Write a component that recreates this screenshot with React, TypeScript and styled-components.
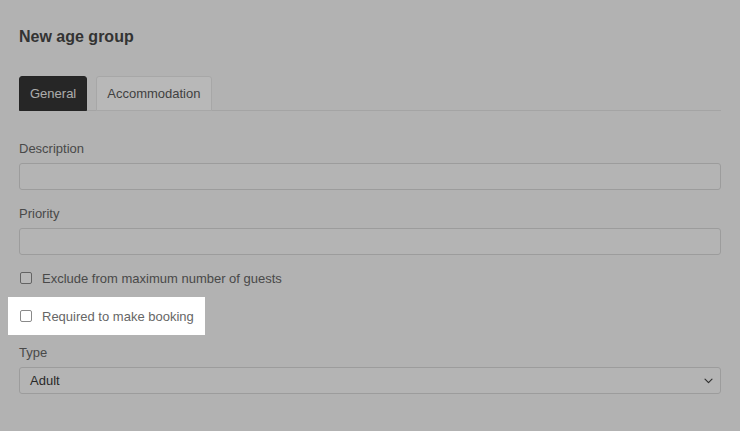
import React from "react";
import styled, { createGlobalStyle } from "styled-components";

const Global = createGlobalStyle`
  html, body { margin: 0; padding: 0; background: #f7f7f7; }
  body { font-family: "Liberation Sans", Arial, sans-serif; }
  * { box-sizing: border-box; }
`;

const Page = styled.div`
  padding: 27px 19px 30px 19px;
  min-height: 431px;
  background: #f7f7f7;
  display: flex;
  flex-direction: column;
`;

const Overlay = styled.div`
  position: fixed;
  inset: 0;
  background: rgba(0, 0, 0, 0.28);
  z-index: 1;
`;

const Title = styled.h1`
  margin: 0;
  font-size: 16px;
  line-height: 20px;
  font-weight: 700;
  color: #474747;
`;

const TabList = styled.div`
  margin-top: 29px;
  display: flex;
  gap: 9px;
  border-bottom: 1px solid #e4e4e4;
`;

const Tab = styled.button<{ $active?: boolean; $padRight?: number }>`
  font-family: inherit;
  font-size: 13px;
  height: 35px;
  padding: 0 ${(p) => p.$padRight ?? 10}px 0 10px;
  margin-bottom: -1px;
  border-radius: 3px 3px 0 0;
  border: 1px solid ${(p) => (p.$active ? "#333" : "#e8e8e8")};
  background: ${(p) => (p.$active ? "#353535" : "#ffffff")};
  color: ${(p) => (p.$active ? "#eeeeee" : "#5a5a5a")};
  cursor: pointer;
`;

const Field = styled.div<{ $top: number }>`
  margin-top: ${(p) => p.$top}px;
  display: flex;
  flex-direction: column;
`;

const Label = styled.label`
  font-size: 13px;
  line-height: 15px;
  color: #666;
  margin-bottom: 7px;
`;

const TextInput = styled.input`
  height: 27px;
  width: 100%;
  border: 1px solid #d8d8d8;
  border-radius: 3px;
  background: #fafafa;
  font-family: inherit;
  font-size: 13px;
  padding: 0 10px;
`;

const SelectBox = styled.div`
  height: 27px;
  width: 100%;
  border: 1px solid #d8d8d8;
  border-radius: 3px;
  background: #fafafa;
  display: flex;
  align-items: center;
  justify-content: space-between;
  padding: 0 7px 0 10px;
  font-size: 13px;
  color: #3a3a3a;
`;

const CheckRow = styled.label<{ $highlight?: boolean; $top: number }>`
  margin-top: ${(p) => p.$top}px;
  display: ${(p) => (p.$highlight ? "inline-flex" : "flex")};
  align-self: flex-start;
  align-items: center;
  gap: 10px;
  height: ${(p) => (p.$highlight ? "38px" : "20px")};
  padding: ${(p) => (p.$highlight ? "0 11px 0 11px" : "0")};
  margin-left: ${(p) => (p.$highlight ? "-11px" : "0")};
  background: ${(p) => (p.$highlight ? "#ffffff" : "transparent")};
  position: ${(p) => (p.$highlight ? "relative" : "static")};
  z-index: ${(p) => (p.$highlight ? 2 : "auto")};
  font-size: 13px;
  color: #666;
`;

const Box = styled.span`
  width: 12px;
  height: 12px;
  margin-left: 1px;
  border: 1px solid #8a8a8a;
  border-radius: 2px;
  background: #fff;
  flex: none;
`;

const Chevron = () => (
  <svg width="9" height="6" viewBox="0 0 9 6" fill="none">
    <path d="M1 1.2l3.5 3.5 3.5-3.5" stroke="#444" strokeWidth="1.2" strokeLinecap="round" strokeLinejoin="round" />
  </svg>
);

export default function App() {
  return (
    <>
      <Global />
      <Page>
        <Title>New age group</Title>
        <TabList>
          <Tab $active>General</Tab>
          <Tab $padRight={11}>Accommodation</Tab>
        </TabList>
        <Field $top={30}>
          <Label>Description</Label>
          <TextInput />
        </Field>
        <Field $top={16}>
          <Label>Priority</Label>
          <TextInput />
        </Field>
        <CheckRow $top={13}>
          <Box />
          Exclude from maximum number of guests
        </CheckRow>
        <CheckRow $top={9} $highlight>
          <Box />
          Required to make booking
        </CheckRow>
        <Field $top={10}>
          <Label>Type</Label>
          <SelectBox>
            <span>Adult</span>
            <Chevron />
          </SelectBox>
        </Field>
      </Page>
      <Overlay />
    </>
  );
}
